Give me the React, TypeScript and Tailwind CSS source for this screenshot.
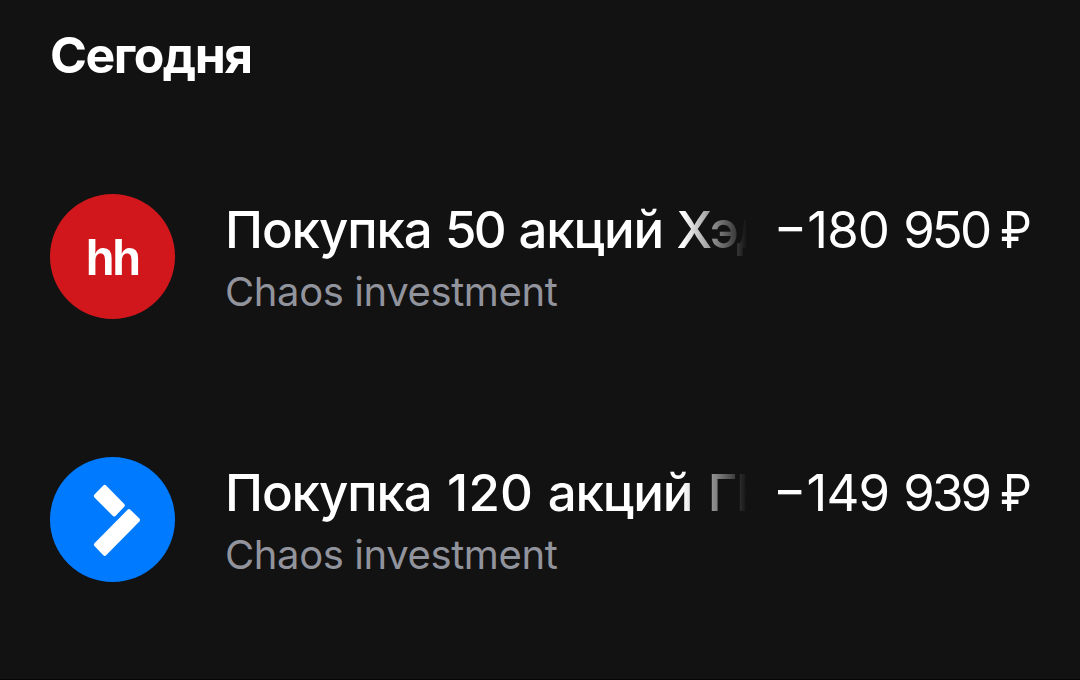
import { ReactNode } from 'react';

interface Operation {
  id: string;
  logo: ReactNode;
  title: ReactNode;
  account: string;
  thousands: string;
  hundreds: string;
}

const HeadHunterLogo = () => (
  <div className="w-[125px] h-[125px] flex-shrink-0 rounded-full bg-[#d2171c]">
    <svg viewBox="0 0 125 125" className="w-full h-full">
      <text
        transform="translate(35.4 81) scale(0.94 1)"
        fill="#fff"
        fontSize="50.5"
        letterSpacing="-2.6"
        className="font-['Liberation_Sans',sans-serif] font-bold"
      >
        hh
      </text>
    </svg>
  </div>
);

const ArrowLogo = () => (
  <div className="w-[125px] h-[125px] flex-shrink-0 rounded-full bg-[#007bff]">
    <svg viewBox="0 0 125 125" className="w-full h-full" fill="#fff" stroke="#fff" strokeWidth="4" strokeLinejoin="round">
      <path d="M54.7 29.9 72.8 48.3 64.3 57.5 45.9 39Z" />
      <path d="M79 54.2 88 63 54.7 96.8 45.9 87.7Z" />
    </svg>
  </div>
);

const operations: Operation[] = [
  {
    id: 'hh',
    logo: <HeadHunterLogo />,
    title: (
      <>
        Покупка <span className="tracking-[-2.8px] ml-px mr-[2px]">50</span> акций{' '}
        <span className="tracking-[-2.6px] ml-px">Хэд</span>
      </>
    ),
    account: 'Chaos investment',
    thousands: '180',
    hundreds: '950',
  },
  {
    id: 'gk',
    logo: <ArrowLogo />,
    title: (
      <>
        Покупка <span className="tracking-[0.2px] ml-[3px] mr-[2px]">120</span> акций{' '}
        <span className="tracking-[-1.6px] ml-[3px]">ГК</span>
      </>
    ),
    account: 'Chaos investment',
    thousands: '149',
    hundreds: '939',
  },
];

const OperationRow = ({ logo, title, account, thousands, hundreds }: Operation) => (
  <li className="flex h-[125px]">
    {logo}
    <div className="ml-[50px] pt-[3px] flex-1 min-w-0">
      <div className="flex h-[66px] leading-[66px] whitespace-nowrap text-white">
        {/* Long names fade out before the amount */}
        <div className="w-[522px] overflow-hidden text-[51px] font-medium tracking-[-1.1px] [mask-image:linear-gradient(to_right,#000_458px,transparent_522px)]">
          {title}
        </div>
        <div className="flex-1 flex justify-end text-[51px] -mr-px [font-feature-settings:'case']">
          <span>−</span>
          <span className="tracking-[-0.9px]">{thousands}</span>
          <span className="ml-[14px] tracking-[-2.9px]">{hundreds}</span>
          <span className="ml-[7px] origin-right scale-x-[0.88]">₽</span>
        </div>
      </div>
      <div className="h-[56px] leading-[58px] text-[40px] tracking-[-0.4px] text-[#92949d] whitespace-nowrap">{account}</div>
    </div>
  </li>
);

const App = () => {
  return (
    <div className="w-[1080px] h-[680px] overflow-hidden bg-[#121212] border-b border-[#0a0508] pl-[50px] pr-[49px] font-['Inter',sans-serif]">
      <h1 className="pt-[25px] h-[194px] leading-[60px] text-[50px] font-bold tracking-[-1.5px] text-white">Сегодня</h1>
      <ul className="flex flex-col gap-[138px]">
        {operations.map((operation) => (
          <OperationRow key={operation.id} {...operation} />
        ))}
      </ul>
    </div>
  );
};

export default App;
